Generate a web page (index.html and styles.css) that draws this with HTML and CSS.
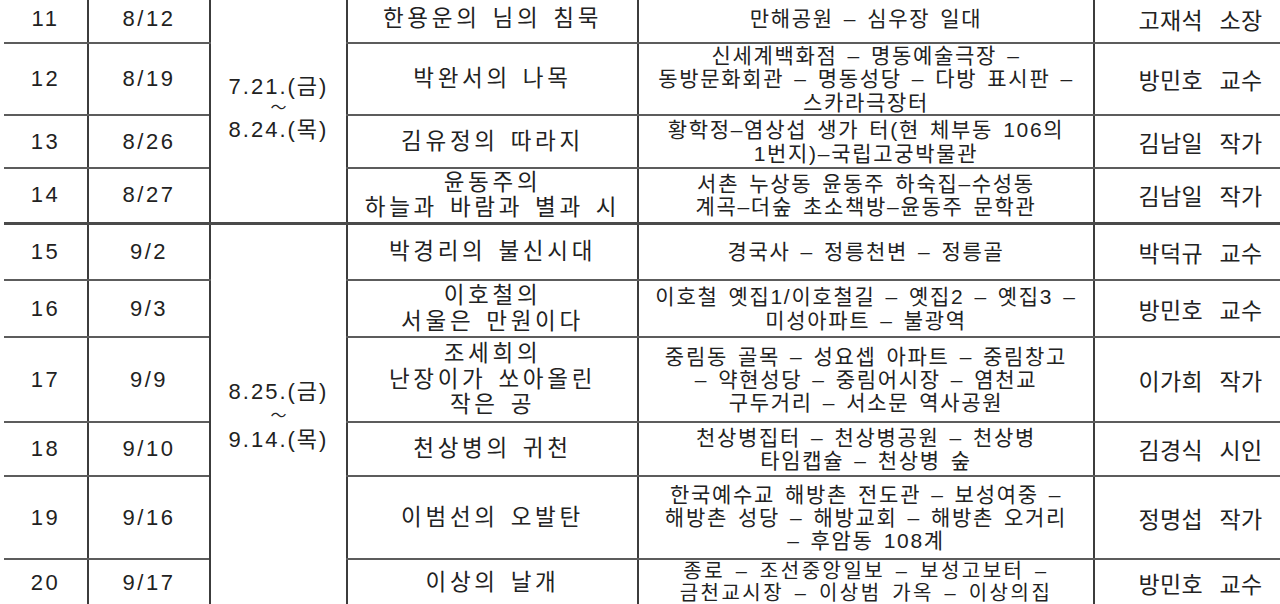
FILE: index.html
```html
<!DOCTYPE html>
<html lang="ko">
<head>
<meta charset="utf-8">
<title>문학 답사 일정</title>
<link rel="stylesheet" href="styles.css">
</head>
<body>
<div class="page">
<table class="schedule">
  <colgroup>
    <col class="c-no"><col class="c-date"><col class="c-range"><col class="c-title"><col class="c-route"><col class="c-guide">
  </colgroup>
  <tbody>
    <tr class="h48">
      <td class="num">11</td>
      <td class="num">8/12</td>
      <td class="range" rowspan="4"><div class="rl">7.21.(금)</div><div class="tilde">～</div><div class="rl">8.24.(목)</div></td>
      <td class="title">한용운의 님의 침묵</td>
      <td class="route">만해공원 – 심우장 일대</td>
      <td class="guide">고재석 소장</td>
    </tr>
    <tr class="h72">
      <td class="num">12</td>
      <td class="num">8/19</td>
      <td class="title">박완서의 나목</td>
      <td class="route">신세계백화점 – 명동예술극장 –<br>동방문화회관 – 명동성당 – 다방 표시판 –<br>스카라극장터</td>
      <td class="guide">방민호 교수</td>
    </tr>
    <tr class="h53">
      <td class="num">13</td>
      <td class="num">8/26</td>
      <td class="title">김유정의 따라지</td>
      <td class="route">황학정–염상섭 생가 터(현 체부동 106의<br>1번지)–국립고궁박물관</td>
      <td class="guide">김남일 작가</td>
    </tr>
    <tr class="h55">
      <td class="num">14</td>
      <td class="num">8/27</td>
      <td class="title">윤동주의<br>하늘과 바람과 별과 시</td>
      <td class="route">서촌 누상동 윤동주 하숙집–수성동<br>계곡–더숲 초소책방–윤동주 문학관</td>
      <td class="guide">김남일 작가</td>
    </tr>
    <tr class="h57 sep">
      <td class="num">15</td>
      <td class="num">9/2</td>
      <td class="range range-b" rowspan="6"><div class="rl">8.25.(금)</div><div class="tilde">～</div><div class="rl">9.14.(목)</div></td>
      <td class="title">박경리의 불신시대</td>
      <td class="route">경국사 – 정릉천변 – 정릉골</td>
      <td class="guide">박덕규 교수</td>
    </tr>
    <tr class="h57">
      <td class="num">16</td>
      <td class="num">9/3</td>
      <td class="title">이호철의<br>서울은 만원이다</td>
      <td class="route">이호철 옛집1/이호철길 – 옛집2 – 옛집3 –<br>미성아파트 – 불광역</td>
      <td class="guide">방민호 교수</td>
    </tr>
    <tr class="h85">
      <td class="num">17</td>
      <td class="num">9/9</td>
      <td class="title">조세희의<br>난장이가 쏘아올린<br>작은 공</td>
      <td class="route">중림동 골목 – 성요셉 아파트 – 중림창고<br>– 약현성당 – 중림어시장 – 염천교<br>구두거리 – 서소문 역사공원</td>
      <td class="guide">이가희 작가</td>
    </tr>
    <tr class="h54">
      <td class="num">18</td>
      <td class="num">9/10</td>
      <td class="title">천상병의 귀천</td>
      <td class="route">천상병집터 – 천상병공원 – 천상병<br>타임캡슐 – 천상병 숲</td>
      <td class="guide">김경식 시인</td>
    </tr>
    <tr class="h83">
      <td class="num">19</td>
      <td class="num">9/16</td>
      <td class="title">이범선의 오발탄</td>
      <td class="route">한국예수교 해방촌 전도관 – 보성여중 –<br>해방촌 성당 – 해방교회 – 해방촌 오거리<br>– 후암동 108계</td>
      <td class="guide">정명섭 작가</td>
    </tr>
    <tr class="h48">
      <td class="num">20</td>
      <td class="num">9/17</td>
      <td class="title">이상의 날개</td>
      <td class="route route-tail">종로 – 조선중앙일보 – 보성고보터 –<br>금천교시장 – 이상범 가옥 – 이상의집</td>
      <td class="guide">방민호 교수</td>
    </tr>
  </tbody>
</table>
</div>
</body>
</html>
```
FILE: styles.css
```css
html, body {
  margin: 0;
  padding: 0;
  background: #ffffff;
  overflow: hidden;
}

body {
  font-family: "Liberation Sans", "Noto Sans CJK KR", sans-serif;
  color: #222222;
}

.page {
  width: 1280px;
  height: 604px;
  overflow: hidden;
}

.schedule {
  border-collapse: collapse;
  table-layout: fixed;
  width: 1302px;
  margin: -5px 0 0 4px;
}

.c-no { width: 84px; }
.c-date { width: 122px; }
.c-range { width: 137px; }
.c-title { width: 291px; }
.c-route { width: 456px; }
.c-guide { width: 212px; }

.schedule td {
  padding: 0;
  text-align: center;
  vertical-align: middle;
  white-space: nowrap;
  border-top: 2px solid #5c5c5c;
  border-bottom: 2px solid #5c5c5c;
  border-left: 2px solid #3c3c3c;
}

.schedule tr:first-child td { border-top: none; }
.schedule tr td:first-child { border-left: none; }
.schedule tr.sep td { border-top: 3px solid #4a4a4a; }

.h48 { height: 48px; }
.h53 { height: 53px; }
.h54 { height: 54px; }
.h55 { height: 55px; }
.h57 { height: 57px; }
.h72 { height: 72px; }
.h83 { height: 83px; }
.h85 { height: 85px; }

.num {
  font-size: 22px;
  letter-spacing: 2.5px;
}

.range {
  font-size: 22px;
  letter-spacing: 2px;
}

.range .rl {
  line-height: 25px;
}

.tilde {
  font-size: 16px;
  letter-spacing: 0;
  line-height: 18px;
}

.range-b .tilde {
  line-height: 23px;
}

.title {
  font-size: 22.5px;
  letter-spacing: 3.7px;
  word-spacing: 2px;
  line-height: 25.5px;
}

.route {
  font-size: 21px;
  letter-spacing: 1.7px;
  word-spacing: 2.5px;
  line-height: 23.3px;
}

.schedule td.route-tail {
  vertical-align: top;
  font-size: 20px;
  letter-spacing: 2.5px;
  line-height: 22px;
}

.guide {
  font-size: 23px;
  letter-spacing: 0.3px;
  word-spacing: 10px;
}
```
